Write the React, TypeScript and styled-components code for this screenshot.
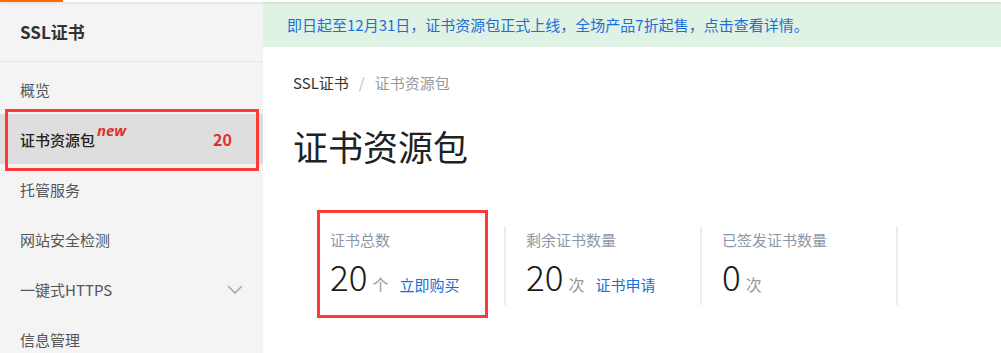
import React from 'react';
import styled, { createGlobalStyle } from 'styled-components';

// ============================================================
// GLOBAL
// ============================================================

const GlobalStyle = createGlobalStyle`
  html, body {
    margin: 0;
    padding: 0;
    background: #fff;
    font-family: "Noto Sans CJK SC", "Noto Sans", sans-serif;
  }
  * { box-sizing: border-box; }
`;

// ============================================================
// STYLED COMPONENTS
// ============================================================

const Page = styled.div`
  display: flex;
  flex-direction: column;
  height: 100vh;
  width: 100vw;
  overflow: hidden;
`;

const TopStrip = styled.div`
  height: 2px;
  background: #fff;
  box-shadow: 0 1px 3px rgba(0, 0, 0, 0.12);
  position: relative;
  z-index: 2;
  flex-shrink: 0;
`;

const OrangeMark = styled.div`
  width: 63px;
  height: 2px;
  background: #ff6a00;
`;

const Body = styled.div`
  flex: 1;
  display: flex;
  min-height: 0;
`;

const Sidebar = styled.aside`
  position: relative;
  width: 263px;
  flex-shrink: 0;
  background: #f4f4f4;
`;

const SidebarHeader = styled.div`
  height: 60px;
  display: flex;
  align-items: center;
  padding-left: 20px;
  border-bottom: 1px solid #e6e6e6;
  font-size: 17px;
  font-weight: 700;
  color: #333;
`;

const MenuList = styled.ul`
  list-style: none;
  margin: 0;
  padding: 2px 0 0;
`;

const MenuItem = styled.li<{ $active?: boolean }>`
  height: 50px;
  display: flex;
  align-items: center;
  justify-content: space-between;
  padding: 0 20px;
  font-size: 15px;
  color: ${({ $active }) => ($active ? '#222' : '#555')};
  font-weight: ${({ $active }) => ($active ? 500 : 400)};
  background: ${({ $active }) => ($active ? '#dedede' : 'transparent')};
  cursor: pointer;
`;

const ItemLabel = styled.span`
  display: flex;
  align-items: center;
`;

const NewTag = styled.span`
  position: relative;
  top: -9px;
  margin-left: 2px;
  font-family: "Noto Sans", sans-serif;
  font-size: 15px;
  font-weight: 700;
  font-style: italic;
  color: #e0302c;
`;

const Count = styled.span`
  margin-right: 11px;
  font-size: 16px;
  font-weight: 700;
  color: #e0302c;
`;

const Chevron = styled.svg`
  display: block;
  width: 16px;
  height: 9px;
`;

const Main = styled.main`
  position: relative;
  flex: 1;
  background: #fff;
  min-width: 0;
`;

const Notice = styled.div`
  height: 45px;
  display: flex;
  align-items: center;
  padding-left: 24px;
  background: #dff2e3;
  font-size: 15px;
  color: #1d6fd6;
  cursor: pointer;
`;

const Content = styled.div`
  padding: 0 30px;
`;

const Breadcrumb = styled.div`
  margin-top: 26px;
  display: flex;
  align-items: center;
  gap: 10px;
  font-size: 15px;
  line-height: 20px;
`;

const Crumb = styled.span<{ $current?: boolean }>`
  color: ${({ $current }) => ($current ? '#999' : '#333')};
`;

const Separator = styled.span`
  color: #bbb;
`;

const PageTitle = styled.h1`
  margin: 29px 0 0;
  font-size: 35px;
  line-height: 48px;
  font-weight: 400;
  color: #222;
`;

const StatsRow = styled.div`
  margin: 57px 0 0 17px;
  display: flex;
`;

const StatCard = styled.div`
  width: 196px;
  height: 78px;
  padding: 3px 0 0 20px;
  border-right: 2px solid #ececec;
`;

const StatLabel = styled.div`
  font-size: 15px;
  line-height: 20px;
  color: #8d97a8;
`;

const StatValueRow = styled.div`
  margin-top: 8px;
  display: flex;
  align-items: baseline;
`;

const StatNumber = styled.span`
  font-size: 35px;
  line-height: 36px;
  font-weight: 300;
  color: #1a1a1a;
`;

const StatUnit = styled.span`
  margin-left: 5px;
  font-size: 16px;
  color: #999;
`;

const StatLink = styled.a`
  margin-left: 11px;
  font-size: 15px;
  color: #1a6fd4;
  text-decoration: none;
  cursor: pointer;
`;

// red highlight frames drawn over the screenshot
const Highlight = styled.div<{ $left: number; $top: number; $w: number; $h: number }>`
  position: absolute;
  left: ${({ $left }) => $left}px;
  top: ${({ $top }) => $top}px;
  width: ${({ $w }) => $w}px;
  height: ${({ $h }) => $h}px;
  border: 3px solid #ff3838;
  pointer-events: none;
`;

// ============================================================
// DATA
// ============================================================

const menu = [
  { label: '概览' },
  { label: '证书资源包', active: true, isNew: true, count: 20 },
  { label: '托管服务' },
  { label: '网站安全检测' },
  { label: '一键式HTTPS', expandable: true },
  { label: '信息管理' },
];

const stats = [
  { label: '证书总数', value: 20, unit: '个', link: '立即购买' },
  { label: '剩余证书数量', value: 20, unit: '次', link: '证书申请' },
  { label: '已签发证书数量', value: 0, unit: '次' },
];

// ============================================================
// COMPONENT
// ============================================================

export default function App() {
  return (
    <Page>
      <GlobalStyle />
      <TopStrip>
        <OrangeMark />
      </TopStrip>

      <Body>
        <Sidebar>
          <SidebarHeader>SSL证书</SidebarHeader>
          <MenuList>
            {menu.map((item) => (
              <MenuItem key={item.label} $active={item.active}>
                <ItemLabel>
                  {item.label}
                  {item.isNew && <NewTag>new</NewTag>}
                </ItemLabel>
                {item.count !== undefined && <Count>{item.count}</Count>}
                {item.expandable && (
                  <Chevron viewBox="0 0 16 9" fill="none" stroke="#aaa" strokeWidth="1.6">
                    <polyline points="1,1 8,8 15,1" />
                  </Chevron>
                )}
              </MenuItem>
            ))}
          </MenuList>
          <Highlight $left={5} $top={107} $w={254} $h={62} />
        </Sidebar>

        <Main>
          <Notice>即日起至12月31日，证书资源包正式上线，全场产品7折起售，点击查看详情。</Notice>
          <Content>
            <Breadcrumb>
              <Crumb>SSL证书</Crumb>
              <Separator>/</Separator>
              <Crumb $current>证书资源包</Crumb>
            </Breadcrumb>
            <PageTitle>证书资源包</PageTitle>
            <StatsRow>
              {stats.map((s) => (
                <StatCard key={s.label}>
                  <StatLabel>{s.label}</StatLabel>
                  <StatValueRow>
                    <StatNumber>{s.value}</StatNumber>
                    <StatUnit>{s.unit}</StatUnit>
                    {s.link && <StatLink>{s.link}</StatLink>}
                  </StatValueRow>
                </StatCard>
              ))}
            </StatsRow>
          </Content>
          <Highlight $left={54} $top={208} $w={171} $h={108} />
        </Main>
      </Body>
    </Page>
  );
}
